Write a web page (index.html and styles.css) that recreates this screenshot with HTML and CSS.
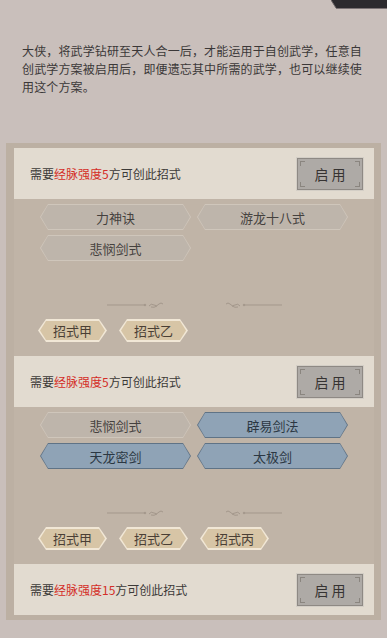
FILE: index.html
```html
<!DOCTYPE html>
<html lang="zh">
<head>
<meta charset="utf-8">
<link rel="stylesheet" href="styles.css">
</head>
<body>
<svg class="corner-deco" width="56" height="10" viewBox="0 0 56 10"><polygon points="0,0 56,0 56,8 5,8" fill="#2c2a2e"/><line x1="5" y1="8.5" x2="56" y2="8.5" stroke="#7a7274" stroke-width="1"/><line x1="0" y1="0" x2="5" y2="8" stroke="#6d6668" stroke-width="1"/></svg>
<p class="intro">大侠，将武学钻研至天人合一后，才能运用于自创武学，任意自创武学方案被启用后，即便遗忘其中所需的武学，也可以继续使用这个方案。</p>

<div class="panel">
  <div class="section">
    <div class="head">
      <span class="req">需要<em>经脉强度5</em>方可创此招式</span>
      <button class="btn">启 用</button>
    </div>
    <div class="body">
      <div class="pills">
        <div class="pill"><span>力神诀</span></div>
        <div class="pill"><span>游龙十八式</span></div>
        <div class="pill"><span>悲悯剑式</span></div>
      </div>
      <svg class="divider" width="175" height="10" viewBox="0 0 175 10"><g stroke="#a3978b" stroke-width="1" fill="none"><line x1="0" y1="5" x2="38" y2="5"/><circle cx="38" cy="5" r="0.8" fill="#a3978b"/><path d="M42 6 q2 -3 5 -1 q3 2 5 -1 q2 -2 4 0"/><path d="M44 7 q3 1 6 -1"/><path d="M133 6 q-2 -3 -5 -1 q-3 2 -5 -1 q-2 -2 -4 0"/><path d="M131 7 q-3 1 -6 -1"/><circle cx="137" cy="5" r="0.8" fill="#a3978b"/><line x1="137" y1="5" x2="175" y2="5"/></g></svg>
      <div class="tags">
        <div class="tag"><span>招式甲</span></div>
        <div class="tag"><span>招式乙</span></div>
      </div>
    </div>
  </div>

  <div class="section">
    <div class="head">
      <span class="req">需要<em>经脉强度5</em>方可创此招式</span>
      <button class="btn">启 用</button>
    </div>
    <div class="body">
      <div class="pills">
        <div class="pill"><span>悲悯剑式</span></div>
        <div class="pill blue"><span>辟易剑法</span></div>
        <div class="pill blue"><span>天龙密剑</span></div>
        <div class="pill blue"><span>太极剑</span></div>
      </div>
      <svg class="divider" width="175" height="10" viewBox="0 0 175 10"><g stroke="#a3978b" stroke-width="1" fill="none"><line x1="0" y1="5" x2="38" y2="5"/><circle cx="38" cy="5" r="0.8" fill="#a3978b"/><path d="M42 6 q2 -3 5 -1 q3 2 5 -1 q2 -2 4 0"/><path d="M44 7 q3 1 6 -1"/><path d="M133 6 q-2 -3 -5 -1 q-3 2 -5 -1 q-2 -2 -4 0"/><path d="M131 7 q-3 1 -6 -1"/><circle cx="137" cy="5" r="0.8" fill="#a3978b"/><line x1="137" y1="5" x2="175" y2="5"/></g></svg>
      <div class="tags">
        <div class="tag"><span>招式甲</span></div>
        <div class="tag"><span>招式乙</span></div>
        <div class="tag"><span>招式丙</span></div>
      </div>
    </div>
  </div>

  <div class="section">
    <div class="head">
      <span class="req">需要<em>经脉强度15</em>方可创此招式</span>
      <button class="btn">启 用</button>
    </div>
  </div>
</div>
</body>
</html>
```

FILE: styles.css
```css
* { box-sizing: border-box; }
html, body { margin: 0; padding: 0; }
body {
  width: 387px;
  height: 638px;
  overflow: hidden;
  background: #c9bfbb;
  font-family: "Noto Sans CJK SC", "Noto Sans", sans-serif;
  color: #3a3736;
  position: relative;
}
.corner-deco {
  position: absolute;
  top: 0;
  right: 0;
  display: block;
}
.intro {
  margin: 42px 0 0 22px;
  width: 342px;
  font-size: 12px;
  letter-spacing: 0.14px;
  line-height: 18px;
  color: #3b3838;
}
.panel {
  margin: 47px 6px 0 6px;
  background: #bcb0a3;
  padding: 5px 7px 5px 8px;
}
.section { display: flex; flex-direction: column; }
.head {
  height: 51px;
  background: #e2dbd0;
  display: flex;
  align-items: center;
  justify-content: space-between;
  padding: 0 11px 0 16px;
}
.req {
  font-size: 12px;
  color: #3d3a38;
}
.req em {
  font-style: normal;
  color: #d42d27;
}
.btn {
  width: 66px;
  height: 32px;
  border: 1px solid #8e8984;
  box-shadow: 0 0 0 1px #d3cec6;
  background:
    linear-gradient(#8a857f,#8a857f) 2px 2px / 5px 1px no-repeat,
    linear-gradient(#8a857f,#8a857f) 2px 2px / 1px 5px no-repeat,
    linear-gradient(#8a857f,#8a857f) right 2px top 2px / 5px 1px no-repeat,
    linear-gradient(#8a857f,#8a857f) right 2px top 2px / 1px 5px no-repeat,
    linear-gradient(#8a857f,#8a857f) left 2px bottom 2px / 5px 1px no-repeat,
    linear-gradient(#8a857f,#8a857f) left 2px bottom 2px / 1px 5px no-repeat,
    linear-gradient(#8a857f,#8a857f) right 2px bottom 2px / 5px 1px no-repeat,
    linear-gradient(#8a857f,#8a857f) right 2px bottom 2px / 1px 5px no-repeat,
    #aeaaa6;
  font-family: "Noto Sans CJK SC", sans-serif;
  font-size: 14px;
  color: #363332;
  padding: 0;
  margin: 0;
}
.body {
  background: #c0b4a7;
  padding: 5px 0 14px 0;
  display: flex;
  flex-direction: column;
}
.pills {
  display: grid;
  grid-template-columns: 151px 151px;
  justify-content: center;
  column-gap: 6px;
  row-gap: 5px;
}
.pill {
  height: 26px;
  position: relative;
  background: #cfc6bb;
  clip-path: polygon(8px 0, calc(100% - 8px) 0, 100% 50%, calc(100% - 8px) 100%, 8px 100%, 0 50%);
  display: flex;
  align-items: center;
  justify-content: center;
}
.pill::before {
  content: "";
  position: absolute;
  inset: 1px;
  background: #beb5ab;
  clip-path: polygon(7px 0, calc(100% - 7px) 0, 100% 50%, calc(100% - 7px) 100%, 7px 100%, 0 50%);
}
.pill span {
  position: relative;
  font-size: 13px;
  color: #45413e;
}
.pill.blue { background: #5f7386; }
.pill.blue::before { background: #8fa3b6; }
.pill.blue span { color: #2b3743; }
.divider {
  display: block;
  margin: 39px auto 0 auto;
}
.tags {
  display: flex;
  gap: 12px;
  padding-left: 24px;
  margin-top: 9px;
}
.tag {
  width: 69px;
  height: 23px;
  position: relative;
  background: #f1e7d6;
  clip-path: polygon(8px 0, calc(100% - 8px) 0, 100% 50%, calc(100% - 8px) 100%, 8px 100%, 0 50%);
  display: flex;
  align-items: center;
  justify-content: center;
}
.tag::before {
  content: "";
  position: absolute;
  inset: 2px;
  background: #d7c5a6;
  clip-path: polygon(6px 0, calc(100% - 6px) 0, 100% 50%, calc(100% - 6px) 100%, 6px 100%, 0 50%);
}
.tag span {
  position: relative;
  font-size: 13px;
  color: #4a3f35;
}
```
